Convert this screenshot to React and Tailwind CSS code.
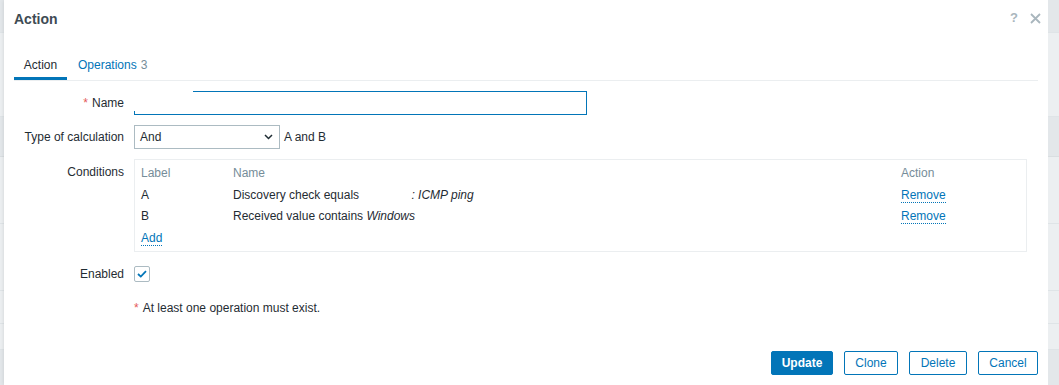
const font = { fontFamily: '"Liberation Sans", Arial, sans-serif' };

const conditions = [
  { label: "A", name: "Discovery check equals", gap: true, value: ": ICMP ping" },
  { label: "B", name: "Received value contains", value: "Windows" },
];

function DottedLink({ children }) {
  return (
    <span className="cursor-pointer border-b border-dotted border-[#0275b8] leading-[14px] text-[#0275b8]">
      {children}
    </span>
  );
}

function FormRow({ label, required, top, children, className = "" }) {
  return (
    <div className={`flex ${top ? "items-start" : "items-center"} ${className}`}>
      <div
        className={`w-[120px] shrink-0 pr-[10px] text-right text-[#1f2c33] ${
          top ? "pt-[4px]" : ""
        }`}
      >
        {required && <span className="mr-[4px] text-[#e45959]">*</span>}
        {label}
      </div>
      {children}
    </div>
  );
}

function SideStrip({ className }) {
  return (
    <div className={`flex shrink-0 flex-col bg-[#eceff1] ${className}`}>
      <div className="h-[33px] border-b border-[#dfe4e7] bg-[#e3e7ea]" />
      <div className="h-[84px] border-b border-[#dfe4e7]" />
      <div className="h-[40px] border-b border-[#d9dee1] bg-[#e3e7ea]" />
      <div className="h-[67px] border-b border-[#dfe4e7]" />
      <div className="h-[67px] border-b border-[#dfe4e7]" />
      <div className="h-[33px] border-b border-[#dfe4e7]" />
      <div className="h-[26px] border-b border-[#dfe4e7]" />
      <div className="flex-1 bg-[#e3e7ea]" />
    </div>
  );
}

export default function App() {
  return (
    <div className="flex h-[385px] w-[1059px] overflow-hidden bg-[#eceff1] text-[12px]" style={font}>
      <SideStrip className="w-[4px]" />

      <div className="flex w-[1044px] flex-col bg-white px-[10px] shadow-[0_0_4px_rgba(0,0,0,0.12)]">
        <div className="flex h-[38px] items-center justify-between">
          <h2 className="text-[14px] font-bold text-[#3e4b54]">Action</h2>
          <div className="-mr-[3px] -mt-[2px] flex items-center gap-[12px] text-[#a9b6bd]">
            <span className="text-[13px] font-bold">?</span>
            <svg width="11" height="11" viewBox="0 0 11 11">
              <path d="M1 1 L10 10 M10 1 L1 10" stroke="currentColor" strokeWidth="1.8" />
            </svg>
          </div>
        </div>

        <div className="mt-[14px] flex h-[29px] border-b border-[#ebeef0]">
          <div className="flex w-[53px] items-center justify-center border-b-[3px] border-[#0275b8] text-[#1f2c33]">
            Action
          </div>
          <div className="flex items-center px-[11px] pb-[3px] text-[#0275b8]">
            Operations
            <span className="ml-[4px] text-[#768d99]">3</span>
          </div>
        </div>

        <div className="flex flex-col">
          <FormRow label="Name" required className="mt-[10px] h-[24px]">
            <div className="relative h-[24px] w-[453px] border border-[#0275b8]">
              <div className="absolute -left-[2px] -top-[2px] h-[21px] w-[60px] bg-white" />
            </div>
          </FormRow>

          <FormRow label="Type of calculation" className="mt-[10px] h-[24px]">
            <div className="flex h-[24px] w-[146px] items-center justify-between border border-[#acbbc2] pl-[5px] pr-[6px] text-[#1f2c33]">
              And
              <svg width="9" height="6" viewBox="0 0 9 6">
                <path d="M1 1 L4.5 4.5 L8 1" fill="none" stroke="#1f2c33" strokeWidth="1.5" />
              </svg>
            </div>
            <span className="ml-[4px] text-[#1f2c33]">A and B</span>
          </FormRow>

          <FormRow label="Conditions" top className="mt-[10px]">
            <div className="h-[93px] w-[893px] border border-[#ebeef0] px-[6px] pt-[2px] text-[#1f2c33]">
              <div className="grid h-[22px] grid-cols-[92px_668px_1fr] items-center pb-[1px] text-[#768d99]">
                <span>Label</span>
                <span>Name</span>
                <span>Action</span>
              </div>
              {conditions.map((c) => (
                <div key={c.label} className="grid h-[21px] grid-cols-[92px_668px_1fr] items-center">
                  <span>{c.label}</span>
                  <span>
                    {c.name}{" "}
                    {c.gap && <span className="inline-block w-[49px]" />}
                    <i>{c.value}</i>
                  </span>
                  <span>
                    <DottedLink>Remove</DottedLink>
                  </span>
                </div>
              ))}
              <div className="flex h-[22px] items-center pt-[2px]">
                <DottedLink>Add</DottedLink>
              </div>
            </div>
          </FormRow>

          <FormRow label="Enabled" className="mt-[10px] h-[24px]">
            <div className="flex h-[16px] w-[16px] items-center justify-center rounded-[2px] border border-[#acbbc2]">
              <svg width="10" height="8" viewBox="0 0 10 8">
                <path d="M1 4 L3.8 6.6 L9 1.2" fill="none" stroke="#0275b8" strokeWidth="1.8" />
              </svg>
            </div>
          </FormRow>

          <FormRow label="" className="mt-[10px] h-[24px]">
            <span className="text-[#1f2c33]">
              <span className="mr-[4px] text-[#e45959]">*</span>
              At least one operation must exist.
            </span>
          </FormRow>
        </div>

        <div className="mt-[31px] flex justify-end gap-[11px]">
          <button className="h-[24px] w-[62px] rounded-[2px] border border-[#0275b8] bg-[#0275b8] font-bold text-white">
            Update
          </button>
          <button className="h-[24px] w-[54px] rounded-[2px] border border-[#0275b8] bg-white text-[#0275b8]">
            Clone
          </button>
          <button className="h-[24px] w-[58px] rounded-[2px] border border-[#0275b8] bg-white text-[#0275b8]">
            Delete
          </button>
          <button className="h-[24px] w-[60px] rounded-[2px] border border-[#0275b8] bg-white text-[#0275b8]">
            Cancel
          </button>
        </div>
      </div>

      <SideStrip className="flex-1" />
    </div>
  );
}
